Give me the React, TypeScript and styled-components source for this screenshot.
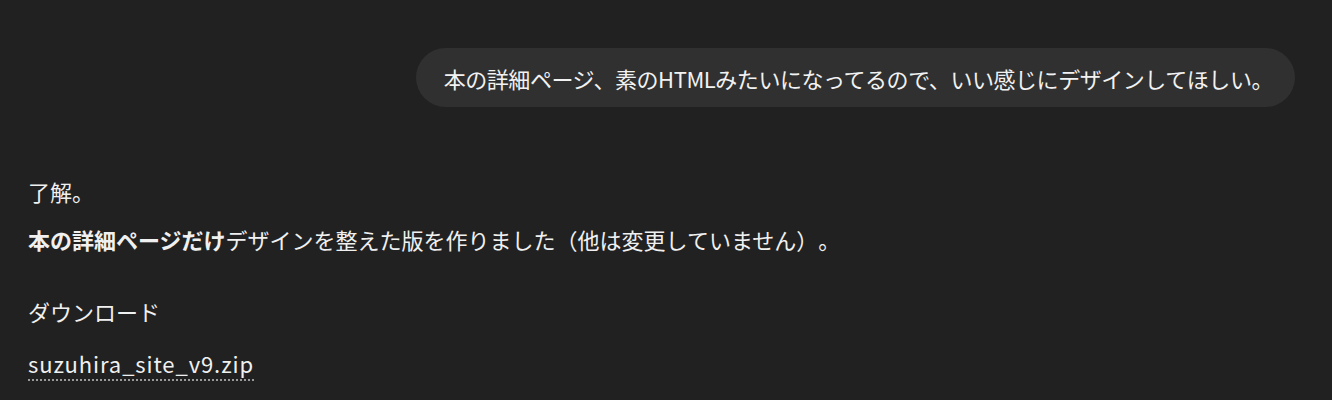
import React from "react";
import styled, { createGlobalStyle } from "styled-components";

const Global = createGlobalStyle`
  html, body { margin: 0; padding: 0; background: #212121; }
  body {
    font-family: "Noto Sans CJK JP", "Noto Sans", sans-serif;
    color: #ececec;
    text-spacing-trim: space-all;
  }
`;

const Page = styled.div`
  width: 1332px;
  height: 400px;
  background: #212121;
  box-sizing: border-box;
  padding: 48px 37px 0 28px;
  display: flex;
  flex-direction: column;
`;

const UserRow = styled.div`
  display: flex;
  justify-content: flex-end;
`;

const Bubble = styled.div`
  background: #303030;
  border-radius: 30px;
  padding: 0 22px 0 28px;
  height: 59px;
  display: flex;
  align-items: center;
  font-size: 22px;
  letter-spacing: -0.45px;
  color: #f2f2f2;
  text-spacing-trim: space-all;
`;

const Reply = styled.div`
  margin-top: 60px;
  font-size: 22px;
  color: #f0f0f0;
  text-spacing-trim: space-all;
`;

const Line = styled.p<{ $gap?: number }>`
  margin: 0;
  margin-top: ${(p) => p.$gap ?? 0}px;
  line-height: 48px;
`;

const Strong = styled.strong`
  font-weight: 700;
`;

const Link = styled.a`
  color: #f0f0f0;
  text-decoration: none;
  letter-spacing: 0.9px;
  border-bottom: 2px dotted #9a9a9a;
  padding-bottom: 0px;
`;

export default function App() {
  return (
    <>
      <Global />
      <Page>
        <UserRow>
          <Bubble>本の詳細ページ、素のHTMLみたいになってるので、いい感じにデザインしてほしい。</Bubble>
        </UserRow>
        <Reply>
          <Line>了解。</Line>
          <Line>
            <Strong>本の詳細ページだけ</Strong>デザインを整えた版を作りました（他は変更していません）。
          </Line>
          <Line $gap={24}>ダウンロード</Line>
          <Line $gap={4}>
            <Link href="#">suzuhira_site_v9.zip</Link>
          </Line>
        </Reply>
      </Page>
    </>
  );
}
